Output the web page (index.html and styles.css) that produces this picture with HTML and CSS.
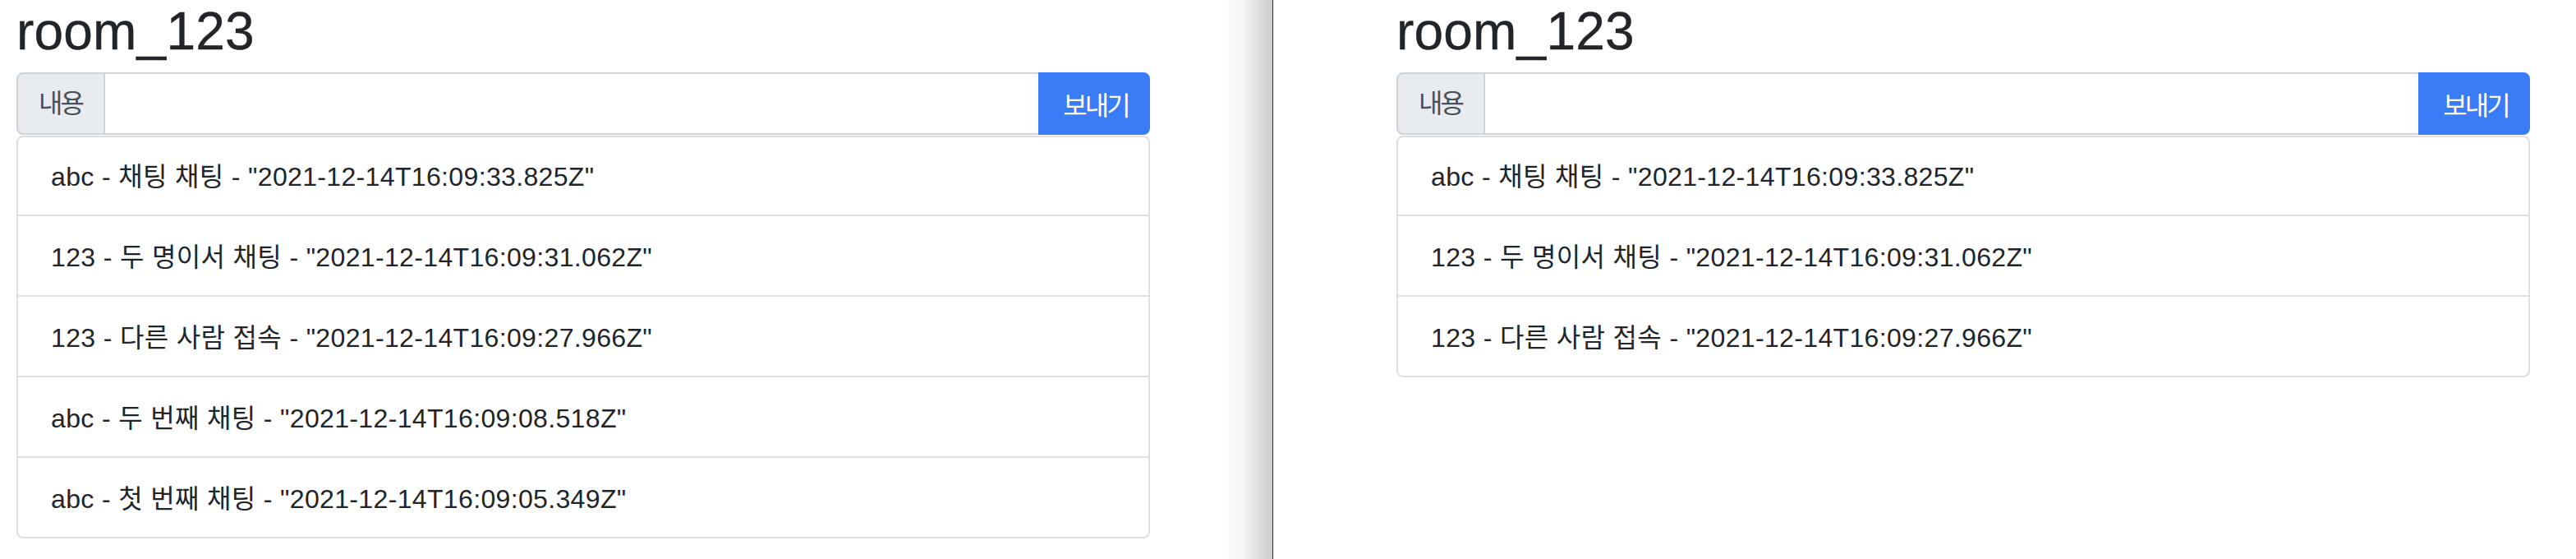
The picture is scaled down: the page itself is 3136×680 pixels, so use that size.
FILE: index.html
```html
<!DOCTYPE html>
<html lang="ko">
<head>
<meta charset="utf-8">
<title>room_123</title>
<link rel="stylesheet" href="styles.css">
</head>
<body>
<div class="screen">
  <section class="pane pane-left">
    <div class="room">
      <h2 class="room-title">room_123</h2>
      <form class="input-group">
        <span class="input-label">내용</span>
        <input class="input-field" type="text">
        <button class="send-btn" type="button">보내기</button>
      </form>
      <ul class="chat-list">
        <li class="chat-item">abc - 채팅 채팅 - "2021-12-14T16:09:33.825Z"</li>
        <li class="chat-item">123 - 두 명이서 채팅 - "2021-12-14T16:09:31.062Z"</li>
        <li class="chat-item">123 - 다른 사람 접속 - "2021-12-14T16:09:27.966Z"</li>
        <li class="chat-item">abc - 두 번째 채팅 - "2021-12-14T16:09:08.518Z"</li>
        <li class="chat-item">abc - 첫 번째 채팅 - "2021-12-14T16:09:05.349Z"</li>
      </ul>
    </div>
  </section>
  <section class="pane pane-right">
    <div class="room">
      <h2 class="room-title">room_123</h2>
      <form class="input-group">
        <span class="input-label">내용</span>
        <input class="input-field" type="text">
        <button class="send-btn" type="button">보내기</button>
      </form>
      <ul class="chat-list">
        <li class="chat-item">abc - 채팅 채팅 - "2021-12-14T16:09:33.825Z"</li>
        <li class="chat-item">123 - 두 명이서 채팅 - "2021-12-14T16:09:31.062Z"</li>
        <li class="chat-item">123 - 다른 사람 접속 - "2021-12-14T16:09:27.966Z"</li>
      </ul>
    </div>
  </section>
</div>
</body>
</html>
```

FILE: styles.css
```css
* {
  box-sizing: border-box;
}

html, body {
  margin: 0;
  padding: 0;
  background: #fff;
}

body {
  font-family: "Liberation Sans", "Noto Sans CJK KR", sans-serif;
  color: #212529;
  font-size: 32px;
  line-height: 48px;
}

.screen {
  display: flex;
  width: 3136px;
  height: 680px;
  overflow: hidden;
}

.pane {
  height: 680px;
}

.pane-left {
  flex: 0 0 1550px;
  padding-left: 20px;
  border-right: 1px solid #2a2a2a;
  background: #fff linear-gradient(to right, rgba(0, 0, 0, 0) 0%, rgba(0, 0, 0, 0.04) 40%, rgba(0, 0, 0, 0.2) 100%) right top / 62px 100% no-repeat;
}

.pane-right {
  flex: 1 1 auto;
  padding-left: 150px;
}

.room {
  width: 1380px;
}

.room-title {
  margin: 0 0 12px;
  font-size: 64px;
  line-height: 76px;
  font-weight: 400;
  letter-spacing: 0.2px;
  color: #212529;
  -webkit-text-stroke: 0.4px #212529;
}

.input-group {
  display: flex;
  height: 76px;
  margin: 0 0 1px;
}

.input-label {
  display: flex;
  align-items: center;
  flex: 0 0 108px;
  padding: 0 0 0 25px;
  font-size: 32px;
  letter-spacing: -3px;
  color: #495057;
  background: #e9ecef;
  border: 2px solid #ced4da;
  border-radius: 8px 0 0 8px;
}

.input-field {
  flex: 1 1 auto;
  min-width: 0;
  height: 76px;
  margin: 0;
  padding: 0 24px;
  font: inherit;
  background: #fff;
  border: 2px solid #ced4da;
  border-left: 0;
  border-right: 0;
  outline: none;
}

.send-btn {
  flex: 0 0 136px;
  height: 76px;
  margin: 0;
  padding: 0 0 0 4px;
  font-family: "Liberation Sans", "Noto Sans CJK KR", sans-serif;
  font-size: 32px;
  letter-spacing: -3px;
  color: #fff;
  background: #3a7bf6;
  border: 2px solid #3a7bf6;
  border-radius: 0 8px 8px 0;
  text-align: center;
}

.chat-list {
  list-style: none;
  margin: 0;
  padding: 0;
  display: flex;
  flex-direction: column;
}

.chat-item {
  padding: 26px 40px 22px;
  line-height: 48px;
  height: 98px;
  letter-spacing: 0.35px;
  background: #fff;
  border: 2px solid #dfdfdf;
  border-top-width: 0;
}

.chat-item:first-child {
  height: 98px;
  padding-top: 24px;
  border-top-width: 2px;
  border-radius: 8px 8px 0 0;
}

.chat-item:last-child {
  border-radius: 0 0 8px 8px;
}
```
